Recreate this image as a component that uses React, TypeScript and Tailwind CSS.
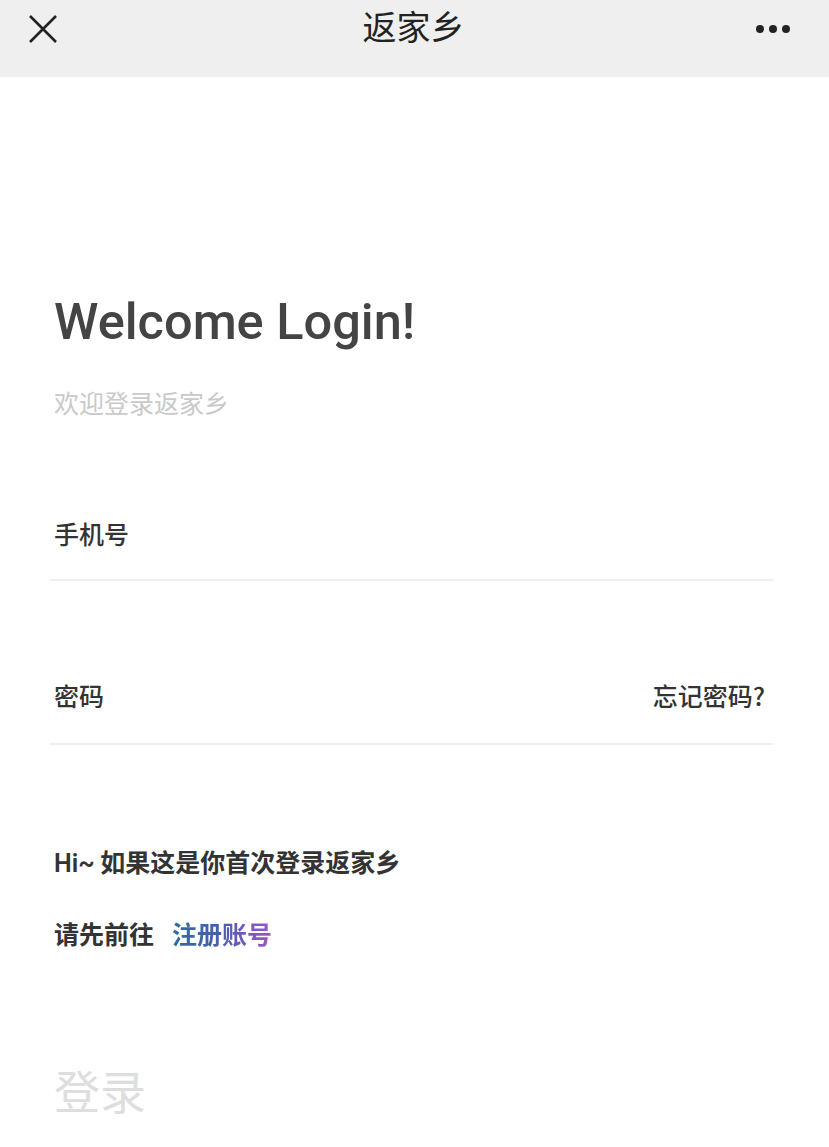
import React from 'react';

const cjk = '"Noto Sans CJK SC", "Noto Sans", sans-serif';

const App = () => {
  return (
    <div className="w-[829px] h-[1147px] bg-white overflow-hidden" style={{ fontFamily: cjk }}>
      {/* header */}
      <header className="h-[77px] bg-[#efefef] flex items-start justify-between px-[27px] pt-[12px]">
        <svg width="32" height="32" viewBox="0 0 32 32" className="mt-[1px]">
          <path d="M3 3 L29 29 M29 3 L3 29" stroke="#222" strokeWidth="2.6" fill="none" />
        </svg>
        <h1 className="text-[34px] leading-[34px] text-[#222] font-normal mt-[-3px] ml-[12px]">返家乡</h1>
        <div className="flex gap-[5px] mt-[13px] mr-[12px]">
          <span className="w-[8px] h-[8px] rounded-full bg-[#222]" />
          <span className="w-[8px] h-[8px] rounded-full bg-[#222]" />
          <span className="w-[8px] h-[8px] rounded-full bg-[#222]" />
        </div>
      </header>

      <main className="pl-[54px] pr-[56px]">
        <h2
          className="mt-[216px] text-[50.5px] leading-[58px] font-medium text-[#444]"
          style={{ fontFamily: 'Roboto, sans-serif' }}
        >
          Welcome Login!
        </h2>
        <p className="mt-[36px] text-[25px] leading-[30px] text-[#c9c9c9]">欢迎登录返家乡</p>

        <div className="mt-[100px] pb-[30px] border-b-2 border-[#f0f0f0] -ml-[4px] pl-[4px]">
          <span className="text-[25px] leading-[32px] font-medium text-[#333]">手机号</span>
        </div>

        <div className="mt-[98px] pb-[32px] border-b-2 border-[#f0f0f0] -ml-[4px] pl-[4px] flex justify-between pr-[8px]">
          <span className="text-[25px] leading-[32px] font-medium text-[#333]">密码</span>
          <span className="text-[25px] leading-[32px] font-medium text-[#333]">忘记密码?</span>
        </div>

        <p className="mt-[100px] text-[25px] leading-[32px] font-semibold text-[#333]">
          <span style={{ fontFamily: 'Roboto, "Noto Sans CJK SC", sans-serif' }}>Hi~</span> 如果这是你首次登录返家乡
        </p>
        <p className="mt-[37px] text-[25px] leading-[32px] font-semibold text-[#333]">
          请先前往
          <span className="ml-[18px] bg-gradient-to-r from-[#2a6f99] via-[#4a5bb0] to-[#9a55c8] bg-clip-text text-transparent">
            注册账号
          </span>
        </p>

        <p className="mt-[114px] text-[46px] leading-[52px] text-[#dedede]">登录</p>
      </main>
    </div>
  );
};

export default App;
